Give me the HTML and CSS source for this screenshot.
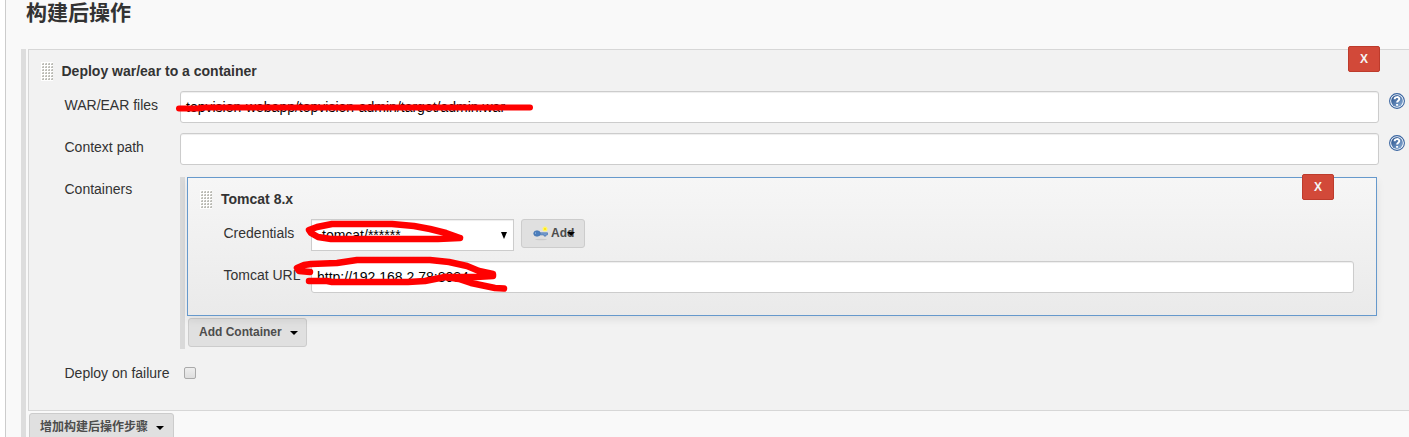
FILE: index.html
```html
<!DOCTYPE html>
<html lang="zh-CN">
<head>
<meta charset="utf-8">
<title>构建后操作</title>
<link rel="stylesheet" href="styles.css">
</head>
<body>
<svg class="defs" width="0" height="0" aria-hidden="true">
  <defs>
    <linearGradient id="helpFill" x1="0" y1="0" x2="1" y2="1"><stop offset="0" stop-color="#204a87"/><stop offset="1" stop-color="#8fb2d9"/></linearGradient>
    <pattern id="dots" width="3" height="3" patternUnits="userSpaceOnUse"><rect width="3" height="3" fill="#fff"/><path d="M1 1h2v2h-2z" fill="#dcdcd8"/><path d="M2 1h1v2h-2v-1h1z" fill="#bcbcb6"/></pattern>
    <symbol id="help" viewBox="0 0 16 16">
      <circle cx="8" cy="8" r="7.4" fill="#fff" stroke="#37639f" stroke-width="1.1"/>
      <circle cx="8" cy="8" r="5.9" fill="url(#helpFill)"/>
      <path d="M5.6 6.3C5.7 3.5 10.3 3.4 10.3 6c0 1.8-2.2 1.7-2.2 3.6M8.1 11v1.8" fill="none" stroke="#fff" stroke-width="2"/>
    </symbol>
    <symbol id="grip" viewBox="0 0 12 19"><rect width="12" height="19" fill="url(#dots)"/></symbol>
  </defs>
</svg>
<main class="page">
  <h1 class="title">构建后操作</h1>
  <div class="steps">
    <section class="panel">
      <button class="remove remove-main">X</button>
      <header class="head"><svg class="grip"><use href="#grip"/></svg><b class="head-main">Deploy war/ear to a container</b></header>
      <div class="row"><label class="label">WAR/EAR files</label><div class="field"><span>topvision-webapp/topvision-admin/target/admin.war</span></div><svg class="help"><use href="#help"/></svg></div>
      <div class="row"><label class="label">Context path</label><div class="field"></div><svg class="help"><use href="#help"/></svg></div>
      <div class="row row-containers">
        <label class="label">Containers</label>
        <div class="containers">
          <section class="container">
            <button class="remove remove-inner">X</button>
            <header class="head"><svg class="grip"><use href="#grip"/></svg><b class="head-inner">Tomcat 8.x</b></header>
            <div class="row inner-row"><label class="label">Credentials</label><div class="field select"><span>tomcat/******</span><svg width="6" height="7"><path d="M0 0h6L3 7z"/></svg></div>
              <button class="button add"><svg class="key" width="16" height="15" viewBox="0 0 16 15"><ellipse cx="8" cy="13.5" rx="6" ry=".8" fill="#ccc"/><circle cx="12" cy="3" r="2.5" fill="#fff46a"/><circle cx="12" cy="3" r="1.1" fill="#ffe600"/><path d="M5 6.8h9.5v2H13v1.3h-2V8.9H5z" fill="#779fd0" stroke="#4876b2" stroke-width=".7"/><ellipse cx="4" cy="7.5" rx="3.3" ry="2.8" fill="#4c7fbd" stroke="#3f70ad" stroke-width=".6"/><circle cx="2.5" cy="7" r=".5" fill="#d6e3f3"/></svg><span>Add</span><svg class="caret add-caret" viewBox="0 0 8 4"><path d="M0 0h8L4 4z"/></svg></button>
            </div>
            <div class="row inner-row"><label class="label">Tomcat URL</label><div class="field"><span class="url">http://192.168.2.78:8084</span></div></div>
          </section>
          <button class="button add-container"><span>Add Container</span><svg class="caret" viewBox="0 0 8 4"><path d="M0 0h8L4 4z"/></svg></button>
        </div>
      </div>
      <div class="row row-failure"><label class="label">Deploy on failure</label><span class="checkbox" role="checkbox" aria-checked="false"></span></div>
    </section>
    <button class="button add-step"><span>增加构建后操作步骤</span><svg class="caret" viewBox="0 0 8 4"><path d="M0 0h8L4 4z"/></svg></button>
  </div>
  <svg class="scribbles" viewBox="0 0 1409 437" aria-hidden="true">
    <path class="strike" d="M179 108.5H197L205 107.5H530"/>
    <path d="M460 238L446 233L430 229L414 226L392 224H332L317 227L309 230L311 233L318 237L331 239H438L460 238"/>
    <path d="M310 272L299 271L297 268L304 265L311 264L337 263L357 260H430L449 262L467 266L479 271L493 274L493 276L476 277H445L425 281L408 282H332L327 281H309"/>
    <path d="M445 277L459 279L471 283L495 288L504 288.5"/>
  </svg>
</main>
</body>
</html>
```
FILE: styles.css
```css
* { box-sizing: border-box; }
body { margin: 0; background: #fff; color: #333; font: 14px/20px "Liberation Sans", "Noto Sans CJK SC", sans-serif; overflow: hidden; }
.defs { position: absolute; }
.page { position: relative; height: 437px; margin-left: 5px; padding-left: 15px; border-left: 1px solid #ccc; background: #f9f9f9; overflow: hidden; }
.title { height: 49px; margin: 0; padding-left: 5px; font: bold 21px/26px "Liberation Sans", "Noto Sans CJK SC", sans-serif; }
.steps { height: 388px; padding-left: 2px; border-left: 5px solid #ddd; }
.panel { position: relative; height: 362px; padding: 12px 4px 0 12px; border: 1px solid #d7d7d7; border-right: 0; background: #f2f2f2; }
.head { display: flex; height: 29px; line-height: 19px; }
.grip { width: 12px; height: 19px; margin-right: 8.5px; }
.head-inner { padding-left: .5px; }
.row { display: flex; align-items: flex-start; height: 42px; padding-left: 23px; }
.label { flex: 0 0 116px; padding: 4px 0 0 .5px; white-space: nowrap; }
.field { flex: 1; height: 32px; padding: 5px; border: 1px solid #ccc; border-radius: 3px; background: #fff; box-shadow: inset 0 1px 1px rgba(0, 0, 0, .07); color: #000; white-space: nowrap; }
.help { width: 16px; height: 16px; margin: 2px 0 0 10px; }
.remove { position: absolute; width: 32px; height: 26px; padding: 0; border: 1px solid #bd3b2c; border-radius: 2px; background: #d24939; color: #f5f5f5; font: bold 12px/24px "Liberation Sans", sans-serif; }
.remove-main { top: -4px; right: 29px; }
.remove-inner { top: -4px; right: 42px; }
.row-containers { height: 184px; }
.containers { flex: 1; height: 172px; margin: 2px 28px 0 0; padding-left: 2px; border-left: 5px solid #d9d9d9; }
.container { position: relative; height: 139px; padding: 12px 22px 0 12px; border: 1px solid #6699cc; background: linear-gradient(#f6f6f6, #eaeaea); box-shadow: 0 4px 8px rgba(0, 0, 0, .08); }
.inner-row .label { flex-basis: 88px; }
.field.select { display: flex; justify-content: space-between; flex: 0 0 203px; padding-left: 10px; padding-right: 6px; border-radius: 0; }
.select svg { margin-top: 7px; }
.button { display: flex; align-items: center; padding: 0 9px; border: 1px solid #ccc; border-radius: 3px; background: #e0e0e0; color: #4d4d4d; font: bold 12px/26px "Liberation Sans", "Noto Sans CJK SC", sans-serif; white-space: nowrap; }
.button > span { padding-bottom: 1px; }
.caret { flex: none; width: 8px; height: 4px; margin-left: 8px; }
.key { flex: none; }
.add { width: 64px; height: 29px; margin-left: 7px; padding: 0 0 0 11px; }
.add > span { margin-left: 2px; }
.add-caret { margin-left: -7px; }
.add-container { width: 119px; height: 29px; margin: 2px 0 0 1px; padding-left: 10px; }
.row-failure .label { flex-basis: 120px; }
.checkbox { width: 12px; height: 12px; margin-top: 8px; border: 1px solid #aaa; border-radius: 2px; background: linear-gradient(#eee, #dedede); }
.add-step { width: 145px; height: 29px; margin: 2px 0 0 1px; padding-left: 10px; }
.scribbles { position: absolute; top: 0; left: -6px; width: 1409px; height: 437px; fill: none; stroke: #f00; stroke-width: 6.5; stroke-linecap: round; stroke-linejoin: round; pointer-events: none; }
.strike { stroke-width: 6; }
```
